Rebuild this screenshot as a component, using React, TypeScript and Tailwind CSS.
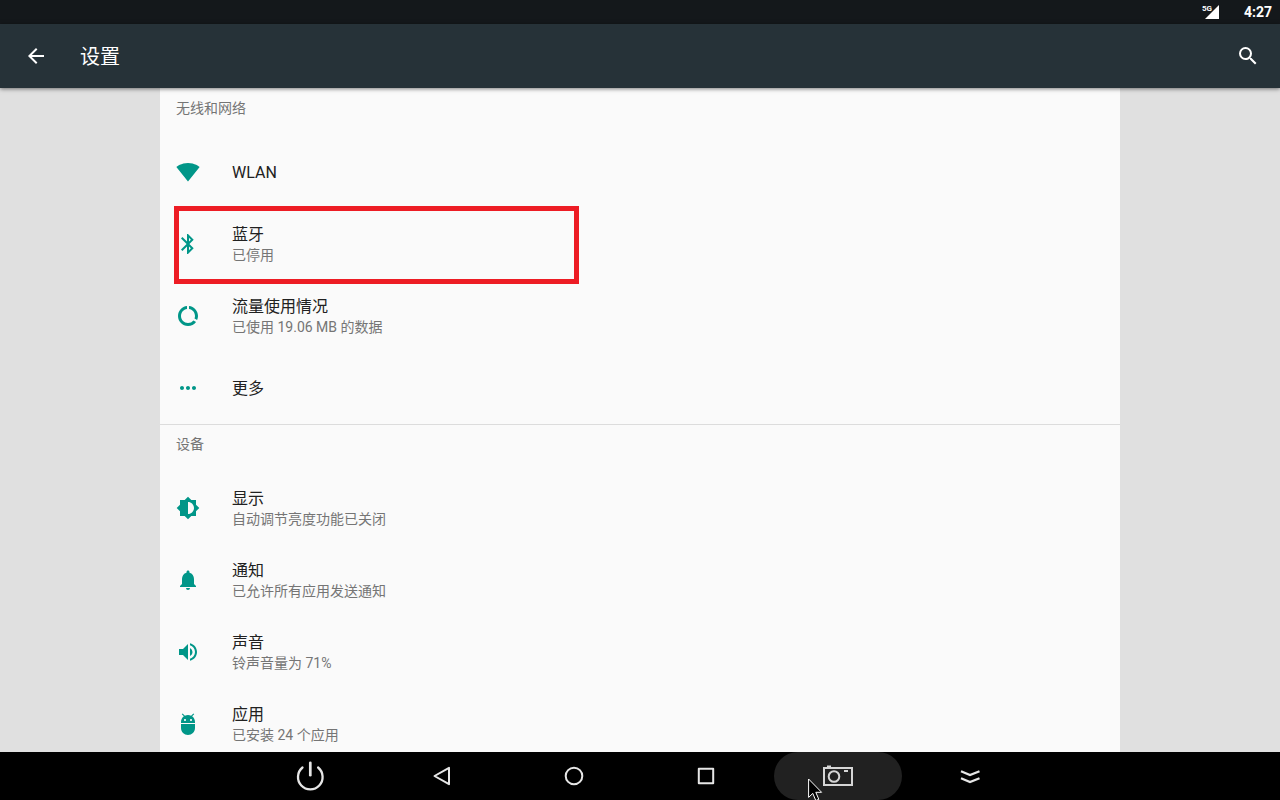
import type { ReactNode } from "react";
import type { IconType } from "react-icons";
import {
  MdAdb,
  MdArrowBack,
  MdBluetooth,
  MdBrightnessMedium,
  MdDataUsage,
  MdMoreHoriz,
  MdNotifications,
  MdSearch,
  MdSignalWifi4Bar,
  MdVolumeUp,
} from "react-icons/md";

interface SettingItem {
  title: string;
  summary?: string;
  icon: IconType;
  highlighted?: boolean;
}

interface SettingSection {
  title: string;
  items: SettingItem[];
}

const sections: SettingSection[] = [
  {
    title: "无线和网络",
    items: [
      { title: "WLAN", icon: MdSignalWifi4Bar },
      {
        title: "蓝牙",
        summary: "已停用",
        icon: MdBluetooth,
        highlighted: true,
      },
      {
        title: "流量使用情况",
        summary: "已使用 19.06 MB 的数据",
        icon: MdDataUsage,
      },
      { title: "更多", icon: MdMoreHoriz },
    ],
  },
  {
    title: "设备",
    items: [
      {
        title: "显示",
        summary: "自动调节亮度功能已关闭",
        icon: MdBrightnessMedium,
      },
      {
        title: "通知",
        summary: "已允许所有应用发送通知",
        icon: MdNotifications,
      },
      { title: "声音", summary: "铃声音量为 71%", icon: MdVolumeUp },
      { title: "应用", summary: "已安装 24 个应用", icon: MdAdb },
    ],
  },
];

function StatusBar() {
  return (
    <div className="flex h-6 shrink-0 items-center justify-end gap-6 bg-[#14181b] pr-2 text-white">
      <div className="flex items-start">
        <span className="text-[8px] leading-[10px] font-bold">5G</span>
        <svg className="-ml-2 h-4 w-4" viewBox="0 0 16 16" fill="currentColor">
          <path d="M15 1v14H1z" />
        </svg>
      </div>
      <span className="text-sm font-bold">4:27</span>
    </div>
  );
}

function AppBar() {
  return (
    <header className="z-10 flex h-16 shrink-0 items-center bg-[#263238] px-5 text-white shadow-[0_1px_4px_rgba(0,0,0,0.5)]">
      <button type="button" aria-label="返回" className="p-1">
        <MdArrowBack className="h-6 w-6" />
      </button>
      <h1 className="ml-7 pt-0.5 text-xl">设置</h1>
      <button type="button" aria-label="搜索" className="ml-auto">
        <MdSearch className="h-6 w-6" />
      </button>
    </header>
  );
}

function SettingRow({ title, summary, icon: Icon, highlighted }: SettingItem) {
  return (
    <li className="relative">
      <button
        type="button"
        className="flex h-18 w-full items-center gap-8 px-4 text-left"
      >
        <Icon className="h-6 w-6 shrink-0 text-[#009688]" />
        <span className="flex flex-col pt-0.5">
          <span className="text-base leading-5 text-[#212121]">{title}</span>
          {summary && (
            <span className="text-sm leading-5 text-[#757575]">{summary}</span>
          )}
        </span>
      </button>
      {highlighted && (
        <div className="pointer-events-none absolute -top-0.5 left-3.5 h-[78px] w-[405px] border-5 border-[#ed1c24]" />
      )}
    </li>
  );
}

function NavButton({
  label,
  active = false,
  children,
}: {
  label: string;
  active?: boolean;
  children: ReactNode;
}) {
  return (
    <button
      type="button"
      aria-label={label}
      className={`relative flex h-12 w-32 items-center justify-center rounded-full ${
        active ? "bg-[#212121]" : ""
      }`}
    >
      {children}
    </button>
  );
}

function NavBar() {
  return (
    <nav className="flex h-12 shrink-0 justify-center gap-1 overflow-hidden bg-black text-[#e6e6e6]">
      <NavButton label="电源">
        <svg
          className="h-8 w-8"
          viewBox="0 0 32 32"
          fill="none"
          stroke="currentColor"
          strokeWidth="2.3"
          strokeLinecap="round"
        >
          <path d="M16.300 2.800v12.400" strokeWidth="2.700" />
          <path d="M8.500 7.500a12.300 12.300 0 1 0 15.600 0" />
        </svg>
      </NavButton>
      <NavButton label="后退">
        <svg
          className="h-6 w-6"
          viewBox="0 0 24 24"
          fill="none"
          stroke="currentColor"
          strokeWidth="2"
          strokeLinejoin="round"
        >
          <path d="M4.5 12 19 3.8v16.4z" />
        </svg>
      </NavButton>
      <NavButton label="主屏幕">
        <svg
          className="h-6 w-6"
          viewBox="0 0 24 24"
          fill="none"
          stroke="currentColor"
          strokeWidth="2"
        >
          <circle cx="12" cy="12" r="8.3" />
        </svg>
      </NavButton>
      <NavButton label="概览">
        <svg
          className="h-6 w-6"
          viewBox="0 0 24 24"
          fill="none"
          stroke="currentColor"
          strokeWidth="2"
          strokeLinejoin="round"
        >
          <rect x="4.8" y="4.8" width="14.4" height="14.4" />
        </svg>
      </NavButton>
      <NavButton label="截图" active>
        <svg
          className="h-6 w-8 text-[#d6d6d6]"
          viewBox="0 0 32 24"
          fill="none"
          stroke="currentColor"
          strokeWidth="2"
        >
          <rect x="2" y="4" width="28" height="17" />
          <circle cx="12" cy="12.5" r="5.3" />
          <path d="M5 2.500h4M22 7h4" />
        </svg>
        <svg
          className="absolute top-[26px] left-[34px] h-6 w-4"
          viewBox="0 0 16 24"
          fill="#000"
          stroke="#fff"
          strokeWidth="1"
        >
          <path d="M.6 1v18.4l4.2-4 3 7.2 3-1.3-3-7h5.8z" />
        </svg>
      </NavButton>
      <NavButton label="隐藏导航栏">
        <svg
          className="h-6 w-6"
          viewBox="0 0 24 24"
          fill="none"
          stroke="currentColor"
          strokeWidth="2.3"
        >
          <path d="M3 7.200 12 11l9.500-3.800M3 14.200 12 18l9.500-3.800" />
        </svg>
      </NavButton>
    </nav>
  );
}

export default function App() {
  return (
    <div className="flex h-screen flex-col bg-[#e0e0e0] font-[Roboto,'Noto_Sans_CJK_SC',sans-serif]">
      <StatusBar />
      <AppBar />
      <main className="min-h-0 flex-1 overflow-hidden px-40">
        <div className="min-h-full bg-[#fafafa]">
          {sections.map((section, i) => (
            <section key={section.title}>
              <h2
                className={`mb-2 h-10 border-t px-4 text-sm leading-[38px] text-[#757575] ${
                  i > 0 ? "border-[#dcdcdc]" : "border-transparent"
                }`}
              >
                {section.title}
              </h2>
              <ul>
                {section.items.map((item) => (
                  <SettingRow key={item.title} {...item} />
                ))}
              </ul>
            </section>
          ))}
        </div>
      </main>
      <NavBar />
    </div>
  );
}
